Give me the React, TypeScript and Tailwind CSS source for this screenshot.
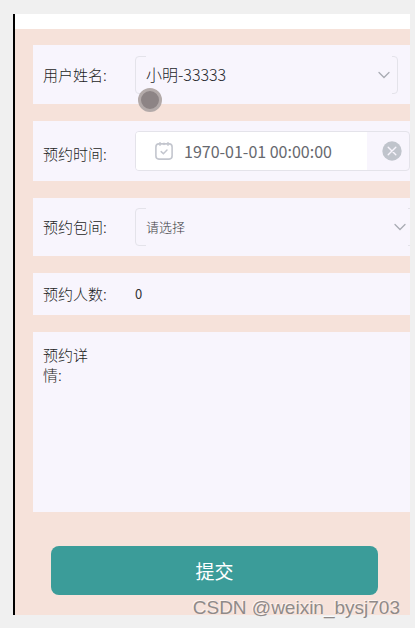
import React, { useState } from 'react';

interface FieldRowProps {
  label: string;
  htmlFor: string;
  className: string;
  labelClassName?: string;
  children: React.ReactNode;
}

const FieldRow: React.FC<FieldRowProps> = ({ label, htmlFor, className, labelClassName = 'whitespace-nowrap', children }) => (
  <div className={`flex bg-[#f8f5fd] pl-[10px] ${className}`}>
    <label htmlFor={htmlFor} className={`w-[92px] shrink-0 pr-9 text-[15px] leading-5 font-light text-[#1c1d24] ${labelClassName}`}>
      {label}
    </label>
    {children}
  </div>
);

const Chevron: React.FC<{ className: string }> = ({ className }) => (
  <svg
    className={`pointer-events-none absolute top-3 h-3 w-3 ${className}`}
    viewBox="0 0 12 12"
    fill="none"
    stroke="#a9abb3"
    strokeWidth="1.3"
    strokeLinecap="round"
  >
    <path d="M1 3.5 6 8.5 11 3.5" />
  </svg>
);

const CalendarIcon = () => (
  <svg className="ml-[19px] h-[18px] w-[18px] shrink-0" viewBox="0 0 18 18" fill="none" stroke="#c3c6ce" strokeLinecap="round">
    <rect x="0.9" y="1.9" width="16.2" height="15.2" rx="3" strokeWidth="1.6" />
    <path d="M5 0.7v2.6M9 1.2v1.2M13 0.7v2.6" strokeWidth="1.5" />
    <path d="m6.2 9.6 2.2 2.1 3.6-3.7" strokeWidth="1.5" />
  </svg>
);

export default function App() {
  const [time, setTime] = useState('1970-01-01 00:00:00');
  const [count, setCount] = useState('0');
  const [detail, setDetail] = useState('');

  return (
    <div className="relative min-h-screen overflow-hidden bg-[#f0f0f0] pt-[14px] pr-[5px] pb-[13px] pl-[13px] font-['Noto_Sans_CJK_SC',sans-serif]">
      <div className="overflow-hidden border-l-2 border-black bg-white pt-[15px]">
        <form className="bg-[#f6e2da] pt-4 pb-5" onSubmit={e => e.preventDefault()}>
          <div className="flex flex-col gap-[17px] pl-[18px]">
            <FieldRow label="用户姓名:" htmlFor="user" className="relative h-[59px] items-center pr-3">
              <div className="relative h-[38px] min-w-0 flex-1 rounded border border-[#e4e3ea] pr-[5px] pl-[10px]">
                <select
                  id="user"
                  className="-mt-px h-[38px] w-full appearance-none bg-[#f8f5fd] pb-0.5 text-[16px] font-light text-[#24252b] outline-none"
                >
                  <option>小明-33333</option>
                </select>
                <Chevron className="right-[7px]" />
              </div>
              {/* touch pointer */}
              <span className="absolute top-[43px] left-[105px] h-6 w-6 rounded-full border-3 border-[#b3aaa9] bg-[#8d8485]" />
            </FieldRow>

            <FieldRow label="预约时间:" htmlFor="time" className="h-[60px] items-center" labelClassName="whitespace-nowrap pt-1.5">
              <div className="flex h-10 min-w-0 flex-1 items-stretch overflow-hidden rounded border border-[#e4e3ea]">
                <div className="flex min-w-0 flex-1 items-center bg-white">
                  <CalendarIcon />
                  <input
                    id="time"
                    type="text"
                    value={time}
                    onChange={e => setTime(e.target.value)}
                    className="ml-[11px] w-full min-w-0 bg-transparent text-[16px] text-[#66686e] outline-none"
                  />
                </div>
                <button
                  type="button"
                  aria-label="清除"
                  onClick={() => setTime('')}
                  className="flex w-[42px] shrink-0 items-center justify-center pl-2"
                >
                  <svg className="h-5 w-5" viewBox="0 0 20 20" fill="none">
                    <circle cx="10" cy="10" r="9.7" fill="#c0c4cc" />
                    <path d="m6.2 6.2 7.6 7.6M13.8 6.2l-7.6 7.6" stroke="#f8f5fd" strokeWidth="1.4" strokeLinecap="round" />
                  </svg>
                </button>
              </div>
            </FieldRow>

            <FieldRow label="预约包间:" htmlFor="room" className="h-[58px] items-center overflow-hidden">
              <div className="relative -mr-1 h-[38px] min-w-0 flex-1 rounded border border-[#e4e3ea] pr-[5px] pl-[10px]">
                <select
                  id="room"
                  className="-mt-px h-[38px] w-full appearance-none bg-[#f8f5fd] text-[13px] font-light text-[#3c3d43] outline-none"
                >
                  <option>请选择</option>
                </select>
                <Chevron className="right-[7px]" />
              </div>
            </FieldRow>

            <FieldRow label="预约人数:" htmlFor="count" className="h-[42px] items-center">
              <input
                id="count"
                type="text"
                value={count}
                onChange={e => setCount(e.target.value)}
                className="min-w-0 flex-1 bg-transparent text-[13px] text-[#333] outline-none"
              />
            </FieldRow>

            <FieldRow label="预约详情:" htmlFor="detail" className="h-[180px] pt-[13px]" labelClassName="">
              <textarea
                id="detail"
                value={detail}
                onChange={e => setDetail(e.target.value)}
                className="h-full min-w-0 flex-1 resize-none bg-transparent text-[13px] text-[#333] outline-none"
              />
            </FieldRow>
          </div>

          <div className="mt-[34px] pr-8 pl-9">
            <button type="submit" className="h-[49px] w-full rounded-lg bg-[#3b9c99] pt-0.5 text-[19px] text-white">
              提交
            </button>
          </div>
        </form>
      </div>

      <span className="absolute right-[15px] bottom-[6px] font-['Liberation_Sans',Arial,sans-serif] text-[19px] leading-7 whitespace-nowrap text-[#8f8a89] [text-shadow:-1px_-1px_0_#ffffffa0]">
        CSDN @weixin_bysj703
      </span>
    </div>
  );
}
